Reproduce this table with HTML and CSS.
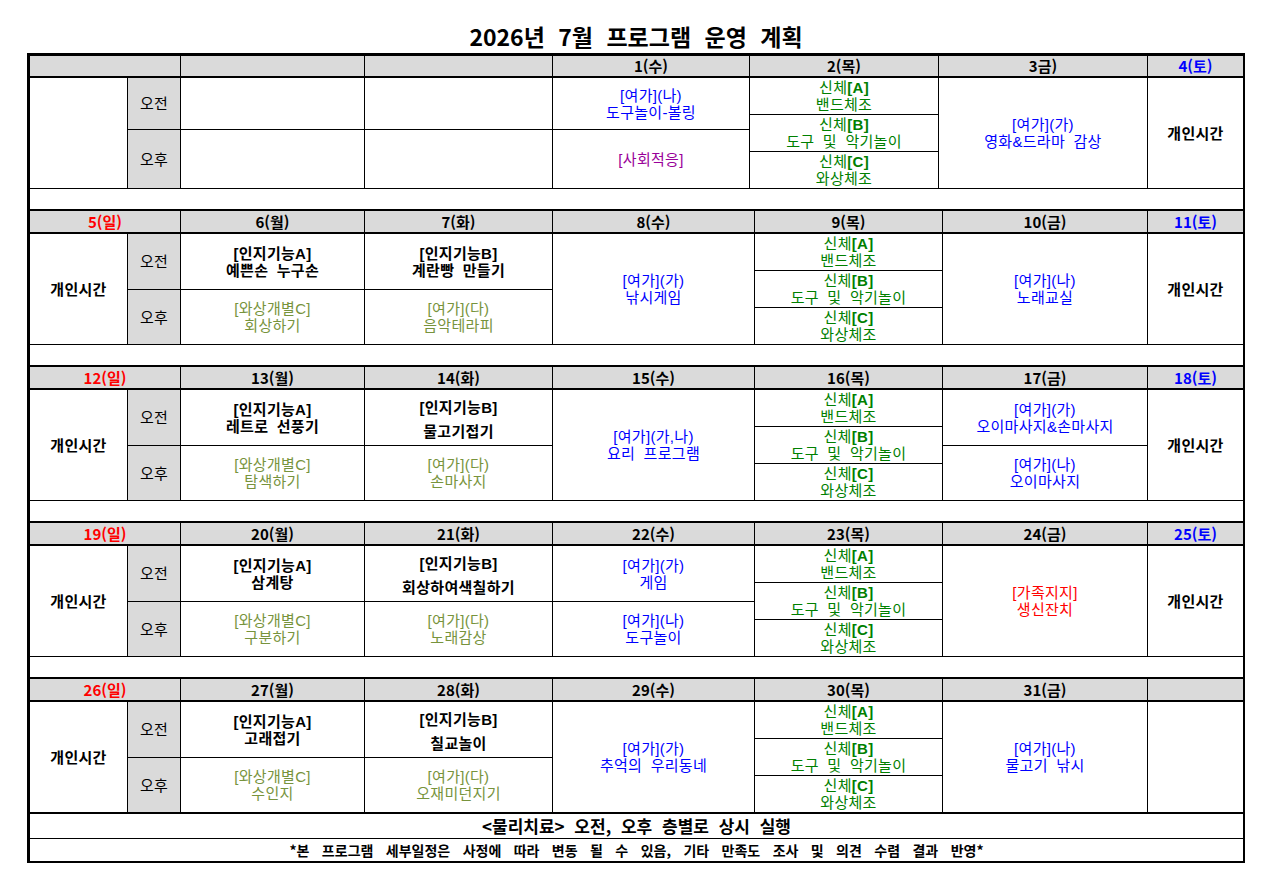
FILE: index.html
```html
<!DOCTYPE html>
<html lang="ko">
<head>
<meta charset="utf-8">
<title>2026년 7월 프로그램 운영 계획</title>
<link rel="stylesheet" href="styles.css">
</head>
<body>
<div class="page">
  <div class="title">2026년 7월 프로그램 운영 계획</div>
  <div class="sheet">

    <!-- Week 1 -->
    <div class="week w1">
      <div class="head">
        <div class="h c-ab"></div>
        <div class="h c-mon"></div>
        <div class="h c-tue"></div>
        <div class="h c-wed">1(수)</div>
        <div class="h c-thu">2(목)</div>
        <div class="h c-fri">3금)</div>
        <div class="h c-sat sat">4(토)</div>
      </div>
      <div class="body">
        <div class="col c-a"></div>
        <div class="col c-b lbl"><div class="cell am">오전</div><div class="cell">오후</div></div>
        <div class="col c-mon"><div class="cell am"></div><div class="cell"></div></div>
        <div class="col c-tue"><div class="cell am"></div><div class="cell"></div></div>
        <div class="col c-wed">
          <div class="cell am blue"><p>[여가](나)<br>도구놀이-볼링</p></div>
          <div class="cell purple"><p>[사회적응]</p></div>
        </div>
        <div class="col c-thu green">
          <div class="cell sub"><p>신체<b>[A]</b><br>밴드체조</p></div>
          <div class="cell sub"><p>신체<b>[B]</b><br>도구 및 악기놀이</p></div>
          <div class="cell"><p>신체<b>[C]</b><br>와상체조</p></div>
        </div>
        <div class="col c-fri"><div class="cell blue"><p>[여가](가)<br>영화&amp;드라마 감상</p></div></div>
        <div class="col c-sat"><div class="cell strong">개인시간</div></div>
      </div>
      <div class="blank"></div>
    </div>

    <!-- Week 2 -->
    <div class="week">
      <div class="head">
        <div class="h c-ab sun">5(일)</div>
        <div class="h c-mon">6(월)</div>
        <div class="h c-tue">7(화)</div>
        <div class="h c-wed">8(수)</div>
        <div class="h c-thu">9(목)</div>
        <div class="h c-fri">10(금)</div>
        <div class="h c-sat sat">11(토)</div>
      </div>
      <div class="body">
        <div class="col c-a"><div class="cell strong">개인시간</div></div>
        <div class="col c-b lbl"><div class="cell am">오전</div><div class="cell">오후</div></div>
        <div class="col c-mon">
          <div class="cell am ink"><p>[인지기능A]<br>예쁜손 누구손</p></div>
          <div class="cell olive"><p>[와상개별C]<br>회상하기</p></div>
        </div>
        <div class="col c-tue">
          <div class="cell am ink"><p>[인지기능B]<br>계란빵 만들기</p></div>
          <div class="cell olive"><p>[여가](다)<br>음악테라피</p></div>
        </div>
        <div class="col c-wed"><div class="cell blue"><p>[여가](가)<br>낚시게임</p></div></div>
        <div class="col c-thu green">
          <div class="cell sub"><p>신체<b>[A]</b><br>밴드체조</p></div>
          <div class="cell sub"><p>신체<b>[B]</b><br>도구 및 악기놀이</p></div>
          <div class="cell"><p>신체<b>[C]</b><br>와상체조</p></div>
        </div>
        <div class="col c-fri"><div class="cell blue"><p>[여가](나)<br>노래교실</p></div></div>
        <div class="col c-sat"><div class="cell strong">개인시간</div></div>
      </div>
      <div class="blank"></div>
    </div>

    <!-- Week 3 -->
    <div class="week">
      <div class="head">
        <div class="h c-ab sun">12(일)</div>
        <div class="h c-mon">13(월)</div>
        <div class="h c-tue">14(화)</div>
        <div class="h c-wed">15(수)</div>
        <div class="h c-thu">16(목)</div>
        <div class="h c-fri">17(금)</div>
        <div class="h c-sat sat">18(토)</div>
      </div>
      <div class="body">
        <div class="col c-a"><div class="cell strong">개인시간</div></div>
        <div class="col c-b lbl"><div class="cell am">오전</div><div class="cell">오후</div></div>
        <div class="col c-mon">
          <div class="cell am ink"><p>[인지기능A]<br>레트로 선풍기</p></div>
          <div class="cell olive"><p>[와상개별C]<br>탐색하기</p></div>
        </div>
        <div class="col c-tue">
          <div class="cell am ink"><p class="wide">[인지기능B]<br>물고기접기</p></div>
          <div class="cell olive"><p>[여가](다)<br>손마사지</p></div>
        </div>
        <div class="col c-wed"><div class="cell blue"><p>[여가](가,나)<br>요리 프로그램</p></div></div>
        <div class="col c-thu green">
          <div class="cell sub"><p>신체<b>[A]</b><br>밴드체조</p></div>
          <div class="cell sub"><p>신체<b>[B]</b><br>도구 및 악기놀이</p></div>
          <div class="cell"><p>신체<b>[C]</b><br>와상체조</p></div>
        </div>
        <div class="col c-fri">
          <div class="cell am blue"><p>[여가](가)<br>오이마사지&amp;손마사지</p></div>
          <div class="cell blue"><p>[여가](나)<br>오이마사지</p></div>
        </div>
        <div class="col c-sat"><div class="cell strong">개인시간</div></div>
      </div>
      <div class="blank"></div>
    </div>

    <!-- Week 4 -->
    <div class="week">
      <div class="head">
        <div class="h c-ab sun">19(일)</div>
        <div class="h c-mon">20(월)</div>
        <div class="h c-tue">21(화)</div>
        <div class="h c-wed">22(수)</div>
        <div class="h c-thu">23(목)</div>
        <div class="h c-fri">24(금)</div>
        <div class="h c-sat sat">25(토)</div>
      </div>
      <div class="body">
        <div class="col c-a"><div class="cell strong">개인시간</div></div>
        <div class="col c-b lbl"><div class="cell am">오전</div><div class="cell">오후</div></div>
        <div class="col c-mon">
          <div class="cell am ink"><p>[인지기능A]<br>삼계탕</p></div>
          <div class="cell olive"><p>[와상개별C]<br>구분하기</p></div>
        </div>
        <div class="col c-tue">
          <div class="cell am ink"><p class="wide">[인지기능B]<br>회상하여색칠하기</p></div>
          <div class="cell olive"><p>[여가](다)<br>노래감상</p></div>
        </div>
        <div class="col c-wed">
          <div class="cell am blue"><p>[여가](가)<br>게임</p></div>
          <div class="cell blue"><p>[여가](나)<br>도구놀이</p></div>
        </div>
        <div class="col c-thu green">
          <div class="cell sub"><p>신체<b>[A]</b><br>밴드체조</p></div>
          <div class="cell sub"><p>신체<b>[B]</b><br>도구 및 악기놀이</p></div>
          <div class="cell"><p>신체<b>[C]</b><br>와상체조</p></div>
        </div>
        <div class="col c-fri"><div class="cell red"><p>[가족지지]<br>생신잔치</p></div></div>
        <div class="col c-sat"><div class="cell strong">개인시간</div></div>
      </div>
      <div class="blank"></div>
    </div>

    <!-- Week 5 -->
    <div class="week last">
      <div class="head">
        <div class="h c-ab sun">26(일)</div>
        <div class="h c-mon">27(월)</div>
        <div class="h c-tue">28(화)</div>
        <div class="h c-wed">29(수)</div>
        <div class="h c-thu">30(목)</div>
        <div class="h c-fri">31(금)</div>
        <div class="h c-sat"></div>
      </div>
      <div class="body">
        <div class="col c-a"><div class="cell strong">개인시간</div></div>
        <div class="col c-b lbl"><div class="cell am">오전</div><div class="cell">오후</div></div>
        <div class="col c-mon">
          <div class="cell am ink"><p>[인지기능A]<br>고래접기</p></div>
          <div class="cell olive"><p>[와상개별C]<br>수인지</p></div>
        </div>
        <div class="col c-tue">
          <div class="cell am ink"><p class="wide">[인지기능B]<br>칠교놀이</p></div>
          <div class="cell olive"><p>[여가](다)<br>오재미던지기</p></div>
        </div>
        <div class="col c-wed"><div class="cell blue"><p>[여가](가)<br>추억의 우리동네</p></div></div>
        <div class="col c-thu green">
          <div class="cell sub"><p>신체<b>[A]</b><br>밴드체조</p></div>
          <div class="cell sub"><p>신체<b>[B]</b><br>도구 및 악기놀이</p></div>
          <div class="cell"><p>신체<b>[C]</b><br>와상체조</p></div>
        </div>
        <div class="col c-fri"><div class="cell blue"><p>[여가](나)<br>물고기 낚시</p></div></div>
        <div class="col c-sat"><div class="cell"></div></div>
      </div>
    </div>

    <div class="note note1">&lt;물리치료&gt; 오전, 오후 층별로 상시 실행</div>
    <div class="note note2">*본 프로그램 세부일정은 사정에 따라 변동 될 수 있음, 기타 만족도 조사 및 의견 수렴 결과 반영*</div>
  </div>
</div>
</body>
</html>
```

FILE: styles.css
```css
* { box-sizing: border-box; }

html, body {
  margin: 0;
  padding: 0;
  background: #ffffff;
}

body {
  font-family: "Liberation Sans", "Noto Sans CJK KR", sans-serif;
  color: #000000;
  font-size: 15px;
  line-height: 17px;
}

p { margin: 0; }

.page {
  margin-left: 27px;
  width: 1218px;
}

.title {
  height: 53px;
  padding-top: 22px;
  text-align: center;
  font-family: "Noto Sans CJK KR", sans-serif;
  font-size: 23px;
  line-height: 28px;
  font-weight: 700;
  word-spacing: 7px;
}

.sheet {
  border-left: 3px solid #000;
  border-right: 2px solid #000;
  border-bottom: 2px solid #000;
}

/* header row of each week */
.head {
  display: flex;
  height: 25px;
  border-top: 2px solid #000;
  border-bottom: 2px solid #000;
}

.w1 .head {
  border-top-width: 3px;
}

.h {
  background: #dadada;
  border-right: 1px solid #000;
  display: flex;
  align-items: center;
  justify-content: center;
  font-family: "Noto Sans CJK KR", sans-serif;
  font-weight: 700;
  font-size: 15px;
  line-height: 18px;
}

.h.c-sat { border-right: none; }

.sun { color: #ff0000; }
.sat { color: #0000ff; }

/* body of each week */
.body {
  display: flex;
  height: 111px;
  border-bottom: 1px solid #000;
}

.last .body {
  height: 112px;
  border-bottom-width: 2px;
}

.col {
  display: flex;
  flex-direction: column;
  border-right: 1px solid #000;
}

.col.c-sat { border-right: none; }

.cell {
  flex: 1 1 0;
  display: flex;
  flex-direction: column;
  align-items: center;
  justify-content: center;
  text-align: center;
  word-spacing: 4px;
  letter-spacing: 0.3px;
  white-space: nowrap;
}

.cell.am {
  flex: 0 0 56px;
  border-bottom: 1px solid #000;
}

.w1 .cell.am { flex-basis: 52px; }

.cell.sub {
  border-bottom: 1px solid #000;
}

.wide {
  line-height: 24px;
  padding-top: 4px;
}

.lbl { background: #dadada; }

.strong { font-weight: 700; }
.ink { font-weight: 600; }

.cell b { font-weight: 700; }

/* column widths */
.c-ab  { flex: 0 0 151px; }
.c-a   { flex: 0 0 98px; }
.c-b   { flex: 0 0 53px; }
.c-mon { flex: 0 0 184px; }
.c-tue { flex: 0 0 188px; }
.c-wed { flex: 0 0 202px; }
.c-thu { flex: 0 0 188px; }
.c-fri { flex: 0 0 205px; }
.c-sat { flex: 1 1 0; }

.w1 .c-wed { flex-basis: 197px; }
.w1 .c-thu { flex-basis: 189px; }
.w1 .c-fri { flex-basis: 209px; }

.blank { height: 20px; }

/* colours */
.blue   { color: #0000ff; }
.green  { color: #008000; }
.olive  { color: #77933c; }
.purple { color: #990099; }
.red    { color: #ff0000; }

/* footer notes */
.note {
  display: flex;
  align-items: center;
  justify-content: center;
  font-family: "Noto Sans CJK KR", sans-serif;
  font-weight: 700;
  white-space: nowrap;
}

.note1 {
  height: 25px;
  border-bottom: 1px solid #000;
  font-size: 17px;
  line-height: 20px;
  word-spacing: 5px;
}

.note2 {
  height: 22px;
  font-size: 14px;
  line-height: 18px;
  word-spacing: 8.5px;
}
```
